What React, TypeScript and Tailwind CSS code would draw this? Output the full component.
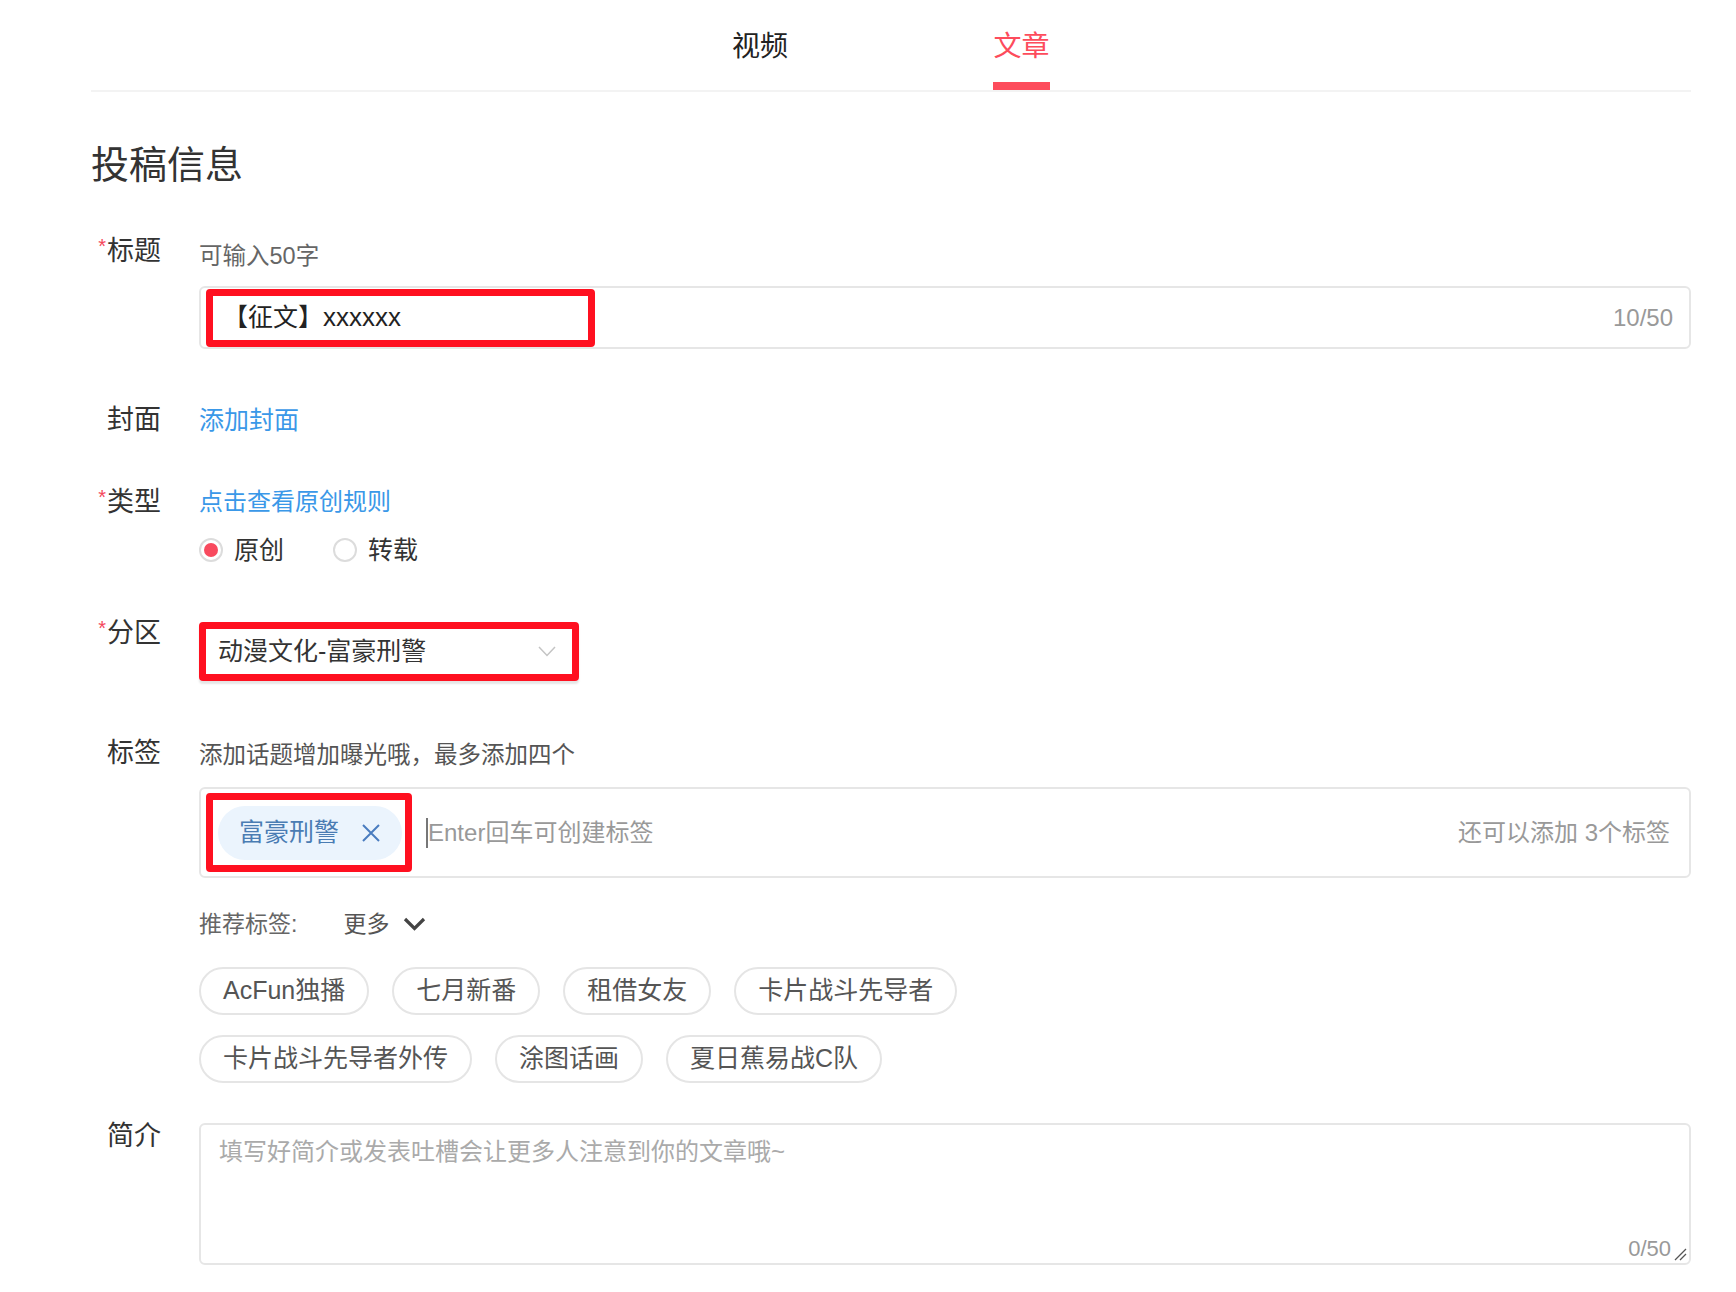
import React from "react";

const Label = ({ text, required }: { text: string; required?: boolean }) => (
  <div className="w-[70px] shrink-0 text-right text-[27px] leading-[38px] text-[#333]">
    {required && (
      <span className="relative top-[-7px] mr-[1px] text-[20px] text-[#f5475b]">*</span>
    )}
    {text}
  </div>
);

const Radio = ({ checked, label }: { checked?: boolean; label: string }) => (
  <div className="flex items-center gap-[11px]">
    <span className="flex h-[24px] w-[24px] items-center justify-center rounded-full border-2 border-[#dcdcdc]">
      {checked && <span className="h-[14px] w-[14px] rounded-full bg-[#f84a5e]" />}
    </span>
    <span className="text-[25px] leading-[38px] text-[#333]">{label}</span>
  </div>
);

const Pill = ({ text }: { text: string }) => (
  <div className="flex h-[48px] items-center rounded-full border-2 border-[#e5e5e5] px-[22px] text-[25px] text-[#555]">
    {text}
  </div>
);

const rowOne = ["AcFun独播", "七月新番", "租借女友", "卡片战斗先导者"];
const rowTwo = ["卡片战斗先导者外传", "涂图话画", "夏日蕉易战C队"];

export default function App() {
  return (
    <div className="min-h-[1292px] w-full bg-white font-['Liberation_Sans','Noto_Sans_CJK_SC',sans-serif]">
      <div className="ml-[91px] w-[1600px]">
        {/* tabs */}
        <div className="flex h-[90px] justify-center gap-[205px]">
          <div className="flex flex-col items-center pt-[27px]">
            <span className="text-[28px] leading-[40px] text-[#222]">视频</span>
          </div>
          <div className="flex flex-col items-center pt-[27px]">
            <span className="text-[28px] leading-[40px] text-[#fd4c5c]">文章</span>
            <span className="mt-[15px] h-[8px] w-[57px] bg-[#fd4c5c]" />
          </div>
        </div>
        <div className="h-[2px] bg-[#f3f3f3]" />

        <h1 className="mt-[47px] text-[38px] leading-[52px] text-[#333]">投稿信息</h1>

        {/* 标题 */}
        <div className="mt-[41px] flex">
          <Label text="标题" required />
          <div className="ml-[38px] flex-1">
            <div className="mt-[8px] text-[23.5px] leading-[32px] text-[#666]">可输入50字</div>
            <div className="relative mt-[14px] flex h-[63px] items-center justify-between rounded-[6px] border-2 border-[#e6e6e6] pl-[22px] pr-[16px]">
              <span className="text-[25px] text-[#222]">【征文】<span className="text-[26px]">xxxxxx</span></span>
              <span className="text-[24px] text-[#999]">10/50</span>
              <div className="pointer-events-none absolute left-[5px] top-[1px] h-[58px] w-[389px] rounded-[4px] border-[7px] border-[#ff1020]" />
            </div>
          </div>
        </div>

        {/* 封面 */}
        <div className="mt-[52px] flex">
          <Label text="封面" />
          <div className="ml-[38px] text-[25px] leading-[38px] text-[#3a98e8]">添加封面</div>
        </div>

        {/* 类型 */}
        <div className="mt-[44px] flex">
          <Label text="类型" required />
          <div className="ml-[38px]">
            <div className="text-[24px] leading-[38px] text-[#3a98e8]">点击查看原创规则</div>
            <div className="mt-[10px] flex gap-[49px]">
              <Radio checked label="原创" />
              <Radio label="转载" />
            </div>
          </div>
        </div>

        {/* 分区 */}
        <div className="mt-[45px] flex">
          <Label text="分区" required />
          <div className="ml-[38px] pt-[8px]">
            <div className="flex h-[59px] w-[380px] items-center justify-between rounded-[4px] border-[7px] border-[#ff1020] pl-[12px] pr-[16px] shadow-[0_3px_2px_rgba(0,0,0,0.1)]">
              <span className="text-[25px] text-[#333]">动漫文化-富豪刑警</span>
              <svg width="18" height="11" viewBox="0 0 18 11" fill="none">
                <polyline points="1,1 9,9.5 17,1" stroke="#c4c4c4" strokeWidth="1.5" />
              </svg>
            </div>
          </div>
        </div>

        {/* 标签 */}
        <div className="mt-[53px] flex">
          <Label text="标签" />
          <div className="ml-[38px] flex-1">
            <div className="mt-[2px] text-[23.5px] leading-[38px] text-[#555]">
              添加话题增加曝光哦，最多添加四个
            </div>
            <div className="relative mt-[13px] flex h-[91px] items-center rounded-[6px] border-2 border-[#e6e6e6] pl-[17px] pr-[19px]">
              <div className="flex h-[54px] items-center gap-[23px] rounded-full bg-[#ebf4fd] pl-[21px] pr-[22px]">
                <span className="text-[25px] text-[#4a7cb3]">富豪刑警</span>
                <svg width="18" height="18" viewBox="0 0 18 18" fill="none">
                  <path d="M1 1L17 17M17 1L1 17" stroke="#4a7cbf" strokeWidth="2" />
                </svg>
              </div>
              <span className="ml-[24px] h-[30px] w-[2px] bg-[#777]" />
              <span className="text-[24px] text-[#999]">Enter回车可创建标签</span>
              <span className="ml-auto text-[24px] text-[#999]">还可以添加 3个标签</span>
              <div className="pointer-events-none absolute left-[5px] top-[4px] h-[79px] w-[206px] rounded-[4px] border-[7px] border-[#ff1020]" />
            </div>

            <div className="mt-[28px] flex items-center text-[23px] leading-[36px] text-[#666]">
              <span>推荐标签:</span>
              <span className="ml-[46px] text-[#555]">更多</span>
              <svg className="ml-[14px]" width="23" height="14" viewBox="0 0 23 14" fill="none">
                <polyline points="2,2 11.5,11.5 21,2" stroke="#444" strokeWidth="3.2" />
              </svg>
            </div>

            <div className="mt-[25px] flex flex-col gap-[20px]">
              <div className="flex gap-[23px]">
                {rowOne.map((t) => (
                  <Pill key={t} text={t} />
                ))}
              </div>
              <div className="flex gap-[23px]">
                {rowTwo.map((t) => (
                  <Pill key={t} text={t} />
                ))}
              </div>
            </div>
          </div>
        </div>

        {/* 简介 */}
        <div className="mt-[34px] flex">
          <Label text="简介" />
          <div className="ml-[38px] flex-1 pt-[6px]">
            <div className="relative h-[142px] rounded-[6px] border-2 border-[#e6e6e6] pl-[18px] pt-[10px]">
              <span className="text-[24px] leading-[34px] text-[#aaa]">
                填写好简介或发表吐槽会让更多人注意到你的文章哦~
              </span>
              <span className="absolute bottom-[-2px] right-[18px] text-[22px] text-[#999]">0/50</span>
              <svg className="absolute bottom-[2px] right-[2px]" width="14" height="14" viewBox="0 0 14 14" fill="none">
                <path d="M2 13L13 2M7 13L13 7" stroke="#555" strokeWidth="1.3" />
              </svg>
            </div>
          </div>
        </div>
      </div>
    </div>
  );
}
